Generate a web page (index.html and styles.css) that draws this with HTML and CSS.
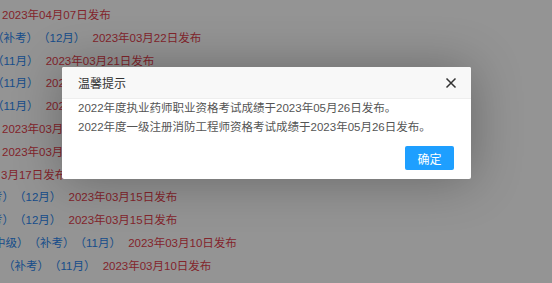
FILE: index.html
```html
<!DOCTYPE html>
<html lang="zh-CN">
<head>
<meta charset="utf-8">
<title>成绩发布</title>
<link rel="stylesheet" href="styles.css">
</head>
<body>
<ul class="list">
  <li class="l1"><span class="date">2023年04月07日发布</span></li>
  <li class="l2"><span class="tag">（补考）（12月）</span> <span class="date">2023年03月22日发布</span></li>
  <li class="l3"><span class="tag">（11月）</span> <span class="date">2023年03月21日发布</span></li>
  <li class="l3"><span class="tag">（11月）</span> <span class="date">2023年03月21日发布</span></li>
  <li class="l3"><span class="tag">（11月）</span> <span class="date">2023年03月20日发布</span></li>
  <li class="l1"><span class="date">2023年03月17日发布</span></li>
  <li class="l1"><span class="date">2023年03月17日发布</span></li>
  <li class="l8"><span class="date">3月17日发布</span></li>
  <li class="l9"><span class="tag">考）（12月）</span> <span class="date">2023年03月15日发布</span></li>
  <li class="l9"><span class="tag">考）（12月）</span> <span class="date">2023年03月15日发布</span></li>
  <li class="l11"><span class="tag">中级）（补考）（11月）</span> <span class="date">2023年03月10日发布</span></li>
  <li class="l12"><span class="tag">（补考）（11月）</span> <span class="date">2023年03月10日发布</span></li>
</ul>

<div class="shade"></div>

<div class="dialog">
  <div class="dialog-title">
    <span>温馨提示</span>
    <svg class="close" width="12" height="12" viewBox="0 0 12 12" aria-label="关闭">
      <path d="M1.5 1.5 L10.5 10.5 M10.5 1.5 L1.5 10.5" stroke="#333" stroke-width="1.5" fill="none"/>
    </svg>
  </div>
  <div class="dialog-body">
    <p>2022年度执业药师职业资格考试成绩于2023年05月26日发布。</p>
    <p>2022年度一级注册消防工程师资格考试成绩于2023年05月26日发布。</p>
  </div>
  <div class="dialog-foot">
    <button class="btn">确定</button>
  </div>
</div>
</body>
</html>
```

FILE: styles.css
```css
html, body {
  margin: 0;
  padding: 0;
  background: #fff;
  overflow: hidden;
  height: 100%;
}

body {
  font-family: "Liberation Sans", "Noto Sans CJK SC", sans-serif;
  position: relative;
  text-spacing-trim: space-all;
}

.list {
  list-style: none;
  margin: 0;
  padding: 4px 0 0 0;
  font-size: 11.5px;
  line-height: 22.8px;
  white-space: nowrap;
}

.tag { color: #2b86ee; }
.date { color: #e2404c; margin-left: 4px; }

.l1 .date { margin-left: 0; }
.l8 .date { margin-left: 0; }

.l1 { text-indent: 2px; }
.l2 { text-indent: -8px; }
.l3 { text-indent: -8px; }
.l8 { text-indent: 1px; }
.l9 { text-indent: -9px; }
.l11 { text-indent: -6px; }
.l12 { text-indent: 3px; }

.shade {
  position: absolute;
  inset: 0;
  background: rgba(0, 0, 0, 0.42);
}

.dialog {
  position: absolute;
  left: 62px;
  top: 67px;
  width: 409px;
  height: 112px;
  background: #fff;
  border-radius: 2px;
  box-shadow: 1px 1px 50px rgba(0, 0, 0, 0.3);
  display: flex;
  flex-direction: column;
  font-family: "Liberation Sans", "Noto Sans CJK SC", sans-serif;
}

.dialog-title {
  height: 31px;
  background: #f8f8f8;
  border-bottom: 1px solid #eee;
  border-radius: 2px 2px 0 0;
  display: flex;
  align-items: center;
  justify-content: space-between;
  padding: 0 14px 0 16px;
  font-size: 12px;
  color: #333;
}

.close { display: block; }

.dialog-body {
  padding: 0 16px;
  font-size: 11.5px;
  line-height: 19px;
  color: #555;
}

.dialog-body p { margin: 0; }

.dialog-foot {
  display: flex;
  justify-content: flex-end;
  padding: 9px 17px 0 0;
}

.btn {
  width: 49px;
  height: 24px;
  border: 0;
  border-radius: 2px;
  background: #1e9fff;
  color: #fff;
  font-family: "Liberation Sans", "Noto Sans CJK SC", sans-serif;
  font-size: 12px;
  padding: 0;
}
```
